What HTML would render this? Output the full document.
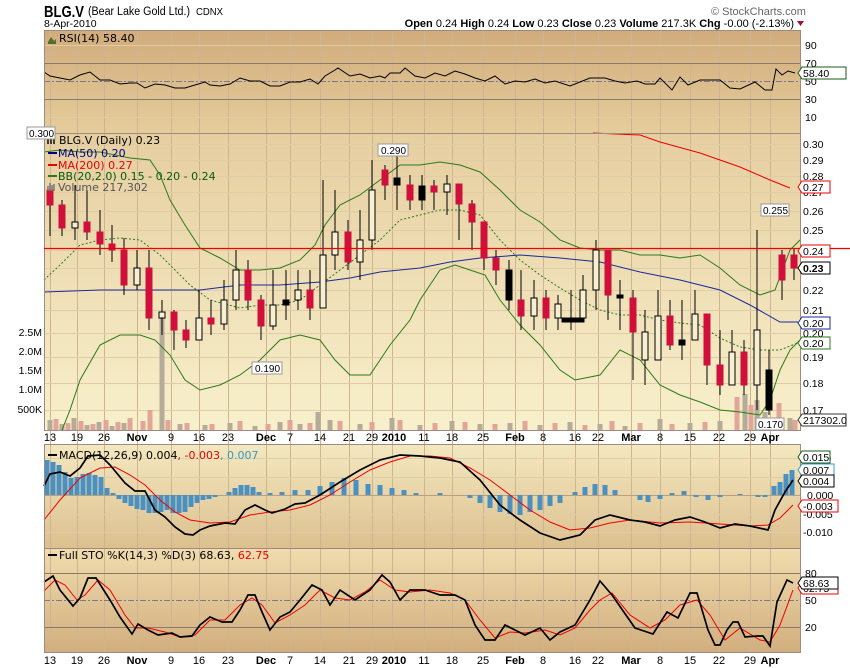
<!DOCTYPE html>
<html><head><meta charset="utf-8"><style>
html,body{margin:0;padding:0;background:#fff;width:850px;height:668px;overflow:hidden}
svg{display:block;font-family:"Liberation Sans",sans-serif}
</style></head><body>
<svg width="850" height="668" viewBox="0 0 850 668" xmlns="http://www.w3.org/2000/svg">
<defs>
<linearGradient id="gR" x1="0" y1="0" x2="0" y2="1"><stop offset="0" stop-color="#d1ab7b"/><stop offset="1" stop-color="#e6cd9c"/></linearGradient>
<linearGradient id="gM" x1="0" y1="0" x2="0" y2="1"><stop offset="0" stop-color="#e6cea0"/><stop offset="1" stop-color="#f8f0cc"/></linearGradient>
<linearGradient id="gD" x1="0" y1="0" x2="0" y2="1"><stop offset="0" stop-color="#f4e8c0"/><stop offset="1" stop-color="#dcc08f"/></linearGradient>
<linearGradient id="gS" x1="0" y1="0" x2="0" y2="1"><stop offset="0" stop-color="#f0dcae"/><stop offset="1" stop-color="#d2ae7e"/></linearGradient>
</defs>
<rect x="44" y="30" width="757" height="103" fill="url(#gR)"/>
<rect x="44" y="133" width="757" height="297" fill="url(#gM)"/>
<rect x="44" y="444" width="757" height="104" fill="url(#gD)"/>
<rect x="44" y="548" width="757" height="104" fill="url(#gS)"/>
<!-- vertical grid -->
<path stroke="#cdb592" stroke-width="1" fill="none" d="M50.5 30V652M77.5 30V652M104.5 30V652M137.5 30V652M171.5 30V652M199.5 30V652M228.5 30V652M266.5 30V652M290.5 30V652M320.5 30V652M349.5 30V652M372.5 30V652M392.5 30V652M424.5 30V652M452.5 30V652M483.5 30V652M515.5 30V652M543.5 30V652M575.5 30V652M598.5 30V652M631.5 30V652M660.5 30V652M690.5 30V652M719.5 30V652M750.5 30V652M770.5 30V652"/>
<!-- horizontal grid -->
<path stroke="#e0cca6" stroke-width="1" fill="none" d="M44 144.5H801M44 160.5H801M44 176.5H801M44 192.5H801M44 211.5H801M44 230.5H801M44 250.5H801M44 268.5H801M44 290.5H801M44 310.5H801M44 333.5H801M44 357.5H801M44 383.5H801M44 410.5H801M44 458.5H801M44 477.5H801M44 514.5H801M44 532.5H801M44 45.5H801M44 117.5H801"/>
<path stroke="#8a7a6a" stroke-width="1" fill="none" d="M44 63.5H801M44 99.5H801M44 573.5H801M44 627.5H801"/>
<path stroke="#7a7a8a" stroke-width="1" fill="none" stroke-dasharray="6,2,2,2" d="M44 81.5H801M44 600.5H801"/>
<path stroke="#b8a080" stroke-width="1" fill="none" d="M44 495.5H801"/>

<!-- volume -->
<path fill="none" stroke="#b5ab98" stroke-width="5" d="M50 430V420M62 430V424M74 430V418M87 430V425M99 430V422M112 430V426M124 430V423M162 430V318M180 430V424M205 430V425M230 430V423M255 430V426M280 430V422M300 430V424M318 430V412M330 430V420M360 430V424M392 430V418M420 430V425M452 430V421M480 430V424M510 430V423M540 430V425M570 430V422M600 430V424M625 430V426M660 430V419M690 430V423M720 430V421M745 430V394M757 430V400M765 430V412M790 430V418"/>
<path fill="none" stroke="#e2a598" stroke-width="5" d="M56 430V419M68 430V423M81 430V421M93 430V424M106 430V420M118 430V422M130 430V418M143 430V421M150 430V410M168 430V420M187 430V423M212 430V424M240 430V421M268 430V424M290 430V420M310 430V423M340 430V421M372 430V422M400 430V420M435 430V423M465 430V422M495 430V424M525 430V421M555 430V423M585 430V425M612 430V421M640 430V423M672 430V424M705 430V422M737 430V397M751 430V405M779 430V403M795 430V420"/>

<!-- BB / MA -->
<polyline fill="none" stroke="#2a7a1a" points="44,152 60,150 80,152 100,152 130,158 150,160 160,175 170,200 185,225 200,248 220,258 240,270 260,270 280,268 300,260 315,245 325,225 340,205 360,195 380,180 400,165 420,165 440,162 460,165 480,172 500,190 520,210 540,222 560,240 580,248 600,250 620,250 640,255 660,255 680,258 700,255 720,268 740,285 760,295 775,290 790,250 800,240"/>
<polyline fill="none" stroke="#2a7a1a" points="62,430 70,410 80,380 100,345 120,335 140,335 155,340 170,355 185,380 200,390 220,385 240,375 260,360 280,340 300,335 320,340 335,360 350,375 370,375 390,345 410,320 420,300 440,270 455,265 470,270 485,275 500,300 520,325 540,345 560,370 575,380 600,375 620,350 640,360 660,385 680,395 700,402 720,410 740,412 760,415 770,400 780,370 790,350 800,340"/>
<polyline fill="none" stroke="#2a7a1a" stroke-dasharray="2,2" points="44,280 60,265 80,245 100,240 120,238 140,240 160,255 175,270 190,285 210,300 240,308 260,305 280,305 300,300 320,285 340,270 360,255 380,240 400,220 420,215 440,210 460,210 480,215 500,240 520,260 540,275 560,288 580,300 600,310 620,315 640,315 660,320 680,323 700,325 720,338 740,347 760,350 780,350 800,342"/>
<polyline fill="none" stroke="#1a2a9a" points="44,292 100,290 150,290 200,290 240,285 280,285 320,282 350,278 380,272 420,268 450,262 480,258 520,255 560,258 600,262 640,272 680,280 720,290 750,305 780,322 798,322"/>
<polyline fill="none" stroke="#e00" points="593,133 640,135 660,142 700,153 740,167 770,180 790,188"/>

<!-- candles: wicks -->
<path fill="none" stroke="#000" stroke-width="1" d="M50 190V236M62 200V236M75 185V240M87 190V240M100 210V255M112 225V262M124 238V295M137 250V290M149 250V330M162 300V335M174 310V350M186 320V348M199 290V330M211 300V335M224 280V330M236 250V310M248 260V310M261 295V340M273 270V330M286 270V320M298 270V310M310 270V320M323 180V280M335 190V270M348 220V270M360 210V280M372 160V250M385 165V200M397 155V210M410 175V210M422 175V210M434 180V210M447 175V215M459 185V240M472 200V250M484 230V270M496 250V285M509 260V310M521 270V330M534 280V330M546 290V330M558 295V330M571 290V330M583 275V320M596 240V310M608 260V320M620 280V330M633 290V380M645 310V385M658 290V360M670 300V350M682 300V360M695 290V340M707 320V385M720 330V395M732 330V375M744 340V395M757 230V410M769 350V415M782 250V300M794 248V280"/>
<!-- candle bodies -->
<g stroke-width="1">
<rect x="47" y="190" width="6" height="15" fill="#d0103a" stroke="#d0103a"/>
<rect x="59" y="205" width="6" height="23" fill="#d0103a" stroke="#d0103a"/>
<rect x="72" y="222" width="6" height="6" fill="#f7efd0" stroke="#000"/>
<rect x="84" y="222" width="6" height="10" fill="#d0103a" stroke="#d0103a"/>
<rect x="97" y="232" width="6" height="12" fill="#d0103a" stroke="#d0103a"/>
<rect x="109" y="244" width="6" height="6" fill="#d0103a" stroke="#d0103a"/>
<rect x="121" y="250" width="6" height="35" fill="#d0103a" stroke="#d0103a"/>
<rect x="134" y="268" width="6" height="17" fill="#f7efd0" stroke="#000"/>
<rect x="146" y="268" width="6" height="50" fill="#d0103a" stroke="#d0103a"/>
<rect x="159" y="312" width="6" height="6" fill="#f7efd0" stroke="#000"/>
<rect x="171" y="312" width="6" height="18" fill="#d0103a" stroke="#d0103a"/>
<rect x="183" y="330" width="6" height="10" fill="#d0103a" stroke="#d0103a"/>
<rect x="196" y="318" width="6" height="22" fill="#f7efd0" stroke="#000"/>
<rect x="208" y="318" width="6" height="6" fill="#d0103a" stroke="#d0103a"/>
<rect x="221" y="300" width="6" height="24" fill="#f7efd0" stroke="#000"/>
<rect x="233" y="270" width="6" height="30" fill="#f7efd0" stroke="#000"/>
<rect x="245" y="270" width="6" height="30" fill="#d0103a" stroke="#d0103a"/>
<rect x="258" y="300" width="6" height="26" fill="#d0103a" stroke="#d0103a"/>
<rect x="270" y="305" width="6" height="21" fill="#f7efd0" stroke="#000"/>
<rect x="283" y="300" width="6" height="5" fill="#000" stroke="#000"/>
<rect x="295" y="290" width="6" height="10" fill="#f7efd0" stroke="#000"/>
<rect x="307" y="290" width="6" height="18" fill="#d0103a" stroke="#d0103a"/>
<rect x="320" y="255" width="6" height="53" fill="#f7efd0" stroke="#000"/>
<rect x="332" y="232" width="6" height="23" fill="#f7efd0" stroke="#000"/>
<rect x="345" y="232" width="6" height="30" fill="#d0103a" stroke="#d0103a"/>
<rect x="357" y="240" width="6" height="22" fill="#f7efd0" stroke="#000"/>
<rect x="369" y="190" width="6" height="50" fill="#f7efd0" stroke="#000"/>
<rect x="382" y="170" width="6" height="15" fill="#d0103a" stroke="#d0103a"/>
<rect x="394" y="178" width="6" height="7" fill="#000" stroke="#000"/>
<rect x="407" y="185" width="6" height="15" fill="#d0103a" stroke="#d0103a"/>
<rect x="419" y="186" width="6" height="14" fill="#000" stroke="#000"/>
<rect x="431" y="186" width="6" height="6" fill="#d0103a" stroke="#d0103a"/>
<rect x="444" y="184" width="6" height="8" fill="#f7efd0" stroke="#000"/>
<rect x="456" y="184" width="6" height="20" fill="#d0103a" stroke="#d0103a"/>
<rect x="469" y="204" width="6" height="18" fill="#d0103a" stroke="#d0103a"/>
<rect x="481" y="222" width="6" height="36" fill="#d0103a" stroke="#d0103a"/>
<rect x="493" y="258" width="6" height="12" fill="#d0103a" stroke="#d0103a"/>
<rect x="506" y="270" width="6" height="30" fill="#000" stroke="#000"/>
<rect x="518" y="300" width="6" height="16" fill="#d0103a" stroke="#d0103a"/>
<rect x="531" y="298" width="6" height="18" fill="#f7efd0" stroke="#000"/>
<rect x="543" y="298" width="6" height="20" fill="#d0103a" stroke="#d0103a"/>
<rect x="555" y="304" width="6" height="14" fill="#f7efd0" stroke="#000"/>
<rect x="562" y="318" width="22" height="4" fill="#000" stroke="#000"/>
<rect x="580" y="290" width="6" height="28" fill="#f7efd0" stroke="#000"/>
<rect x="593" y="250" width="6" height="40" fill="#f7efd0" stroke="#000"/>
<rect x="605" y="250" width="6" height="45" fill="#d0103a" stroke="#d0103a"/>
<rect x="617" y="295" width="6" height="3" fill="#000" stroke="#000"/>
<rect x="630" y="298" width="6" height="34" fill="#d0103a" stroke="#d0103a"/>
<rect x="642" y="332" width="6" height="28" fill="#f7efd0" stroke="#000"/>
<rect x="655" y="316" width="6" height="44" fill="#f7efd0" stroke="#000"/>
<rect x="667" y="316" width="6" height="29" fill="#d0103a" stroke="#d0103a"/>
<rect x="679" y="340" width="6" height="5" fill="#000" stroke="#000"/>
<rect x="692" y="314" width="6" height="26" fill="#f7efd0" stroke="#000"/>
<rect x="704" y="314" width="6" height="51" fill="#d0103a" stroke="#d0103a"/>
<rect x="717" y="365" width="6" height="20" fill="#d0103a" stroke="#d0103a"/>
<rect x="729" y="352" width="6" height="33" fill="#f7efd0" stroke="#000"/>
<rect x="741" y="352" width="6" height="33" fill="#d0103a" stroke="#d0103a"/>
<rect x="754" y="330" width="6" height="55" fill="#f7efd0" stroke="#000"/>
<rect x="766" y="370" width="6" height="40" fill="#000" stroke="#000"/>
<rect x="779" y="255" width="6" height="25" fill="#d0103a" stroke="#d0103a"/>
<rect x="791" y="255" width="6" height="13" fill="#d0103a" stroke="#d0103a"/>
</g>

<!-- RSI -->
<polyline fill="none" stroke="#000" stroke-width="1" points="44,72 50,76 60,78 70,80 80,75 90,72 100,80 110,80 120,84 130,83 137,83 145,88 155,84 165,85 175,88 185,88 195,85 205,82 210,85 220,86 230,84 240,78 250,81 260,81 270,86 280,86 290,82 300,82 310,79 318,84 325,76 335,70 338,68 350,76 360,74 370,78 380,76 385,78 390,73 400,73 405,68 415,76 425,78 435,73 445,76 455,71 465,74 475,78 485,81 495,76 505,84 515,81 525,82 535,79 545,83 555,81 570,86 580,82 590,78 605,78 615,81 625,83 637,81 645,84 655,84 660,78 672,90 680,77 688,85 700,80 710,80 720,80 730,88 740,89 755,82 765,90 772,90 776,69 782,75 788,71 795,73"/>

<!-- MACD histogram -->
<path fill="none" stroke="#4a90c0" stroke-width="5" d="M47 495V460M53 495V462M59 495V465M65 495V472M71 495V478M77 495V477M83 495V474M89 495V473M95 495V475M101 495V477M107 495V488M113 495V493M119 495V499M125 495V503M131 495V506M137 495V509M143 495V510M149 495V513M155 495V513M161 495V512M167 495V510M173 495V513M179 495V513M185 495V512M191 495V507M197 495V503M203 495V500M209 495V499M215 495V497M229 495V492M235 495V488M241 495V485M247 495V485M253 495V487M259 495V492M270 495V493M282 495V492M295 495V490M308 495V490M320 495V486M332 495V482M344 495V478M356 495V480M368 495V484M380 495V485M392 495V488M404 495V490M416 495V493M440 495V493M470 495V498M480 495V503M490 495V508M500 495V512M510 495V514M520 495V515M530 495V512M540 495V510M550 495V506M560 495V503M575 495V492M585 495V487M595 495V484M605 495V485M615 495V490M640 495V500M648 495V502M660 495V499M672 495V493M684 495V491M696 495V497M708 495V500M720 495V497M740 495V494M758 495V497M765 495V497M774 495V486M780 495V482M786 495V474M792 495V470"/>
<polyline fill="none" stroke="#e00" stroke-width="1" points="44,520 60,500 80,478 100,468 115,467 130,475 145,485 160,500 175,512 190,520 210,523 230,522 250,515 270,512 290,510 310,505 330,495 350,482 370,470 390,462 410,456 430,456 450,458 470,468 490,480 510,495 530,510 550,522 570,530 590,528 610,523 630,520 660,523 690,522 720,524 750,526 768,525 780,518 793,505"/>
<polyline fill="none" stroke="#000" stroke-width="1.7" points="44,486 50,474 60,472 70,476 80,468 88,456 100,455 110,465 125,483 135,491 145,491 155,510 165,517 175,527 185,534 193,535 200,530 210,526 225,523 235,524 245,510 255,505 265,510 272,513 285,509 295,504 305,503 320,495 340,482 360,470 380,460 400,455 420,456 440,458 460,462 480,480 500,505 520,520 540,533 560,540 580,535 595,520 610,515 630,520 645,522 660,526 675,520 690,517 705,522 720,528 735,524 750,526 768,530 775,510 785,492 793,480"/>

<!-- STO -->
<polyline fill="none" stroke="#e00" stroke-width="1" points="44,591 55,580 65,585 77,600 85,595 98,580 110,590 125,615 135,628 148,628 165,632 180,637 195,635 210,620 225,620 240,605 252,598 262,605 275,623 290,615 305,605 320,590 335,598 350,600 365,592 380,580 395,590 410,592 430,590 450,593 465,600 480,620 495,638 510,632 525,633 545,630 560,635 575,628 590,610 600,600 612,593 630,615 650,628 665,620 680,605 697,600 710,615 725,640 740,628 760,640 770,642 780,625 793,590"/>
<polyline fill="none" stroke="#000" stroke-width="1.7" points="44,582 53,576 60,590 73,606 80,598 88,578 96,578 110,600 120,617 132,634 138,624 148,630 158,635 172,633 180,637 192,636 200,625 210,617 222,622 232,622 240,610 248,595 255,595 262,612 270,630 280,617 290,612 300,600 312,585 322,590 330,605 340,590 355,600 370,590 382,575 390,582 400,600 410,590 425,590 440,595 455,595 465,600 475,625 485,640 495,640 505,625 515,630 525,635 540,628 550,640 560,632 575,625 590,600 600,581 612,595 635,628 653,634 667,612 678,618 690,593 697,593 708,630 715,645 720,645 727,630 733,622 738,622 745,637 757,636 763,636 770,646 777,602 787,580 793,583"/>

<!-- borders -->
<g fill="none" stroke="#a08a80" stroke-width="1">
<rect x="44.5" y="30.5" width="756" height="400"/>
<rect x="44.5" y="444.5" width="756" height="104"/>
<rect x="44.5" y="548.5" width="756" height="104"/>
<line x1="44" y1="133.5" x2="801" y2="133.5"/>
</g>
<line x1="44" y1="248.5" x2="850" y2="248.5" stroke="#e00" stroke-width="1.2"/>

<!-- header -->
<text x="44" y="17" font-size="16" font-weight="bold" textLength="40" lengthAdjust="spacingAndGlyphs">BLG.V</text>
<text x="88" y="15" font-size="11.5" textLength="102" lengthAdjust="spacingAndGlyphs">(Bear Lake Gold Ltd.)</text>
<text x="196" y="15" font-size="10" textLength="27" lengthAdjust="spacingAndGlyphs">CDNX</text>
<text x="44" y="27" font-size="10.5">8-Apr-2010</text>
<text x="711" y="15" font-size="11" fill="#666">© StockCharts.com</text>
<text x="794" y="27" font-size="11" text-anchor="end"><tspan font-weight="bold">Open</tspan> 0.24 <tspan font-weight="bold">High</tspan> 0.24 <tspan font-weight="bold">Low</tspan> 0.23 <tspan font-weight="bold">Close</tspan> 0.23 <tspan font-weight="bold">Volume</tspan> 217.3K <tspan font-weight="bold">Chg</tspan> -0.00 (-2.13%)</text>
<path d="M797 21h7l-3.5 5z" fill="#a01030"/>

<g font-size="11" font-family="'DejaVu Sans',sans-serif">
<path d="M48 42l3-5 3 4 2-2v5h-8z" fill="#556b2f"/>
<text x="59" y="42">RSI(14) 58.40</text>
<text x="59" y="144">BLG.V (Daily) 0.23</text>
<path d="M48 137v7M51 138v6M54 137v7" stroke="#000" stroke-width="1.4"/>
<line x1="48" y1="153" x2="57" y2="153" stroke="#000080" stroke-width="2"/><text x="58" y="157" fill="#000080">MA(50) 0.20</text>
<line x1="48" y1="165" x2="57" y2="165" stroke="#e00" stroke-width="2"/><text x="58" y="169" fill="#e00">MA(200) 0.27</text>
<line x1="48" y1="176" x2="57" y2="176" stroke="#2a7a1a" stroke-width="2"/><text x="58" y="180" fill="#0a5a0a">BB(20,2.0) 0.15 - 0.20 - 0.24</text>
<path d="M48 191v-5M50 191v-8M52 191v-6M54 191v-7" stroke="#777" stroke-width="1.5"/><text x="58" y="191" fill="#555">Volume 217,302</text>
<line x1="48" y1="455" x2="57" y2="455" stroke="#000" stroke-width="2"/><text x="59" y="459">MACD(12,26,9) 0.004<tspan fill="#e00">, -0.003</tspan><tspan fill="#3399cc">, 0.007</tspan></text>
<line x1="48" y1="555" x2="57" y2="555" stroke="#000" stroke-width="2"/><text x="59" y="559">Full STO %K(14,3) %D(3) 68.63, <tspan fill="#e00">62.75</tspan></text>
</g>

<!-- date axes -->
<g font-size="11" text-anchor="middle">
<text x="50" y="441">13</text><text x="77" y="441">19</text><text x="104" y="441">26</text><text x="137" y="441" font-weight="bold">Nov</text><text x="171" y="441">9</text><text x="199" y="441">16</text><text x="228" y="441">23</text><text x="266" y="441" font-weight="bold">Dec</text><text x="290" y="441">7</text><text x="320" y="441">14</text><text x="349" y="441">21</text><text x="372" y="441">29</text><text x="394" y="441" font-weight="bold">2010</text><text x="424" y="441">11</text><text x="452" y="441">18</text><text x="483" y="441">25</text><text x="515" y="441" font-weight="bold">Feb</text><text x="543" y="441">8</text><text x="575" y="441">16</text><text x="598" y="441">22</text><text x="631" y="441" font-weight="bold">Mar</text><text x="660" y="441">8</text><text x="690" y="441">15</text><text x="719" y="441">22</text><text x="750" y="441">29</text><text x="770" y="441" font-weight="bold">Apr</text>
<text x="50" y="664">13</text><text x="77" y="664">19</text><text x="104" y="664">26</text><text x="137" y="664" font-weight="bold">Nov</text><text x="171" y="664">9</text><text x="199" y="664">16</text><text x="228" y="664">23</text><text x="266" y="664" font-weight="bold">Dec</text><text x="290" y="664">7</text><text x="320" y="664">14</text><text x="349" y="664">21</text><text x="372" y="664">29</text><text x="394" y="664" font-weight="bold">2010</text><text x="424" y="664">11</text><text x="452" y="664">18</text><text x="483" y="664">25</text><text x="515" y="664" font-weight="bold">Feb</text><text x="543" y="664">8</text><text x="575" y="664">16</text><text x="598" y="664">22</text><text x="631" y="664" font-weight="bold">Mar</text><text x="660" y="664">8</text><text x="690" y="664">15</text><text x="719" y="664">22</text><text x="750" y="664">29</text><text x="770" y="664" font-weight="bold">Apr</text>
</g>

<!-- right axis -->
<g font-size="10.5">
<text x="805" y="49">90</text><text x="805" y="67">70</text><text x="805" y="85">50</text><text x="805" y="103">30</text><text x="805" y="121">10</text>
<text x="803" y="148">0.30</text><text x="803" y="164">0.29</text><text x="803" y="180">0.28</text><text x="803" y="196">0.27</text><text x="803" y="215">0.26</text><text x="803" y="234">0.25</text><text x="803" y="254">0.24</text><text x="803" y="272">0.23</text><text x="803" y="294">0.22</text><text x="803" y="314">0.21</text><text x="803" y="337">0.20</text><text x="803" y="361">0.19</text><text x="803" y="387">0.18</text><text x="803" y="414">0.17</text>
<text x="805" y="462">0.010</text><text x="805" y="481">0.005</text><text x="807" y="499">0.000</text><text x="803" y="518">-0.005</text><text x="803" y="536">-0.010</text>
<text x="805" y="577">80</text><text x="805" y="604">50</text><text x="805" y="631">20</text>
</g>
<g font-size="10.5" text-anchor="end">
<text x="42" y="336">2.5M</text><text x="42" y="355">2.0M</text><text x="42" y="374">1.5M</text><text x="42" y="393">1.0M</text><text x="42" y="413">500K</text>
</g>

<!-- price labels -->
<g font-size="10">
<rect x="27" y="127" width="28" height="12" fill="#fff" stroke="#999"/><text x="29" y="137">0.300</text>
<rect x="378" y="144" width="30" height="12" fill="#fff" stroke="#999"/><text x="381" y="154">0.290</text>
<rect x="252" y="362" width="30" height="12" fill="#fff" stroke="#999"/><text x="255" y="372">0.190</text>
<rect x="761" y="204" width="28" height="12" fill="#fff" stroke="#999"/><text x="763" y="214">0.255</text>
<rect x="756" y="418" width="28" height="12" fill="#fff" stroke="#999"/><text x="758" y="428">0.170</text>
</g>

<!-- value tags -->
<g font-size="10.5">
<path d="M798 73l4-6h44v12h-44z" fill="#fff" stroke="#1a5a1a"/><text x="803" y="77">58.40</text>
<path d="M798 187l4-6h28v12h-28z" fill="#fff" stroke="#e00"/><text x="803" y="191">0.27</text>
<path d="M798 251l4-6h28v12h-28z" fill="#fff" stroke="#e00"/><text x="803" y="255">0.24</text>
<path d="M798 268l4-6h28v12h-28z" fill="#fff" stroke="#000"/><text x="803" y="272" font-weight="bold">0.23</text>
<path d="M798 323l4-6h28v12h-28z" fill="#fff" stroke="#1a2a9a"/><text x="803" y="327">0.20</text>
<path d="M798 343l4-6h28v12h-28z" fill="#fff" stroke="#2a7a1a"/><text x="803" y="347">0.20</text>
<path d="M798 420l4-6h44v12h-44z" fill="#fff" stroke="#333"/><text x="803" y="424">217302.0</text>
<path d="M798 457l4-6h28v12h-28z" fill="#fff" stroke="#1a5a1a"/><text x="803" y="461">0.015</text>
<path d="M798 470l4-6h32v12h-32z" fill="#fff" stroke="#3399cc"/><text x="803" y="474">0.007</text>
<path d="M798 481l4-6h32v12h-32z" fill="#fff" stroke="#000"/><text x="803" y="485">0.004</text>
<path d="M798 506l4-6h36v12h-36z" fill="#fff" stroke="#e00"/><text x="803" y="510">-0.003</text>
<path d="M798 588l4-6h36v12h-36z" fill="#fff" stroke="#e00"/><text x="803" y="592">62.75</text>
<path d="M798 583l4-6h36v12h-36z" fill="#fff" stroke="#000"/><text x="803" y="587">68.63</text>
</g>
</svg>
</body></html>
